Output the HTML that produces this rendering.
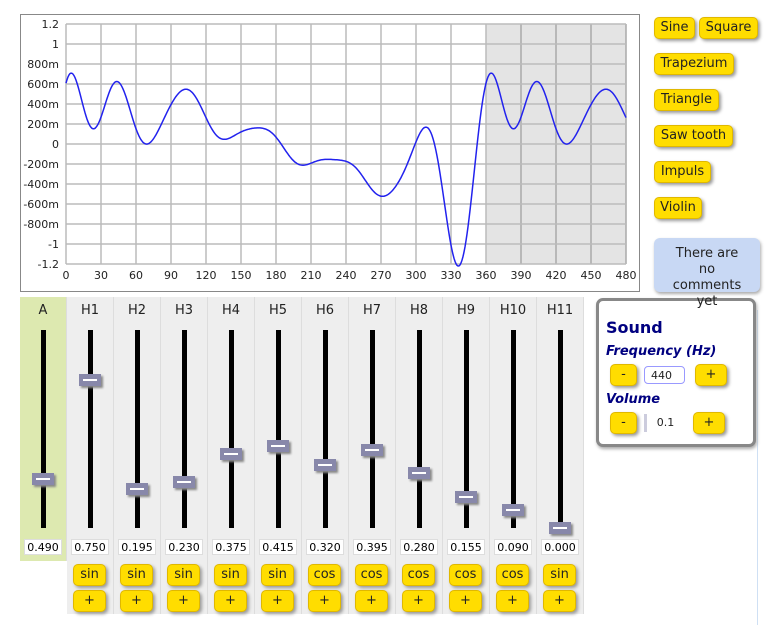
<!DOCTYPE html>
<html><head><meta charset="utf-8"><style>
body{margin:0;width:771px;height:625px;background:#fff;font-family:"DejaVu Sans","Liberation Sans",sans-serif;position:relative;overflow:hidden}
.b{position:absolute;background:#ffdd00;border:1px solid #e0b800;border-radius:5px;box-shadow:2px 2px 3px #999;font-size:13px;color:#222;line-height:20px;text-align:center;box-sizing:border-box;height:22px}
.col{position:absolute;top:297px;width:46px;height:317px;background:#eeeeee;border-right:1px solid #ddd}
.lbl{position:absolute;top:6px;width:100%;text-align:center;font-size:13px;color:#222}
.trk{position:absolute;left:21px;top:33px;width:5px;height:198px;background:#000}
.th{position:absolute;left:12px;width:22px;height:12px;background:#8888aa;box-shadow:2px 2px 2px #888}
.th:after{content:"";position:absolute;left:4px;top:5px;width:14px;height:2px;background:#fff}
.val{position:absolute;left:4px;top:242px;width:38px;height:16px;background:#fff;border:1px solid #ddd;font-size:11px;line-height:16px;text-align:center;box-sizing:border-box}
.sb{width:33px;left:6px;font-size:13px}
</style></head><body>
<svg style="position:absolute;left:0;top:0" width="645" height="295">
<rect x="20.5" y="14.5" width="619" height="277" fill="#fff" stroke="#888"/>
<rect x="486" y="24" width="140" height="240" fill="#e4e4e4"/>
<g id="grid" stroke="#bbb" stroke-width="1.5"></g>
<g id="lab" font-size="11" fill="#222" font-family="DejaVu Sans,sans-serif"></g>
<path id="cv" fill="none" stroke="#2222ee" stroke-width="1.5"/>
</svg>
<div class="b" style="left:654px;top:17px;width:41px">Sine</div>
<div class="b" style="left:699px;top:17px;width:59px">Square</div>
<div class="b" style="left:654px;top:53px;width:80px">Trapezium</div>
<div class="b" style="left:654px;top:89px;width:65px">Triangle</div>
<div class="b" style="left:654px;top:125px;width:79px">Saw tooth</div>
<div class="b" style="left:654px;top:161px;width:57px">Impuls</div>
<div class="b" style="left:654px;top:197px;width:48px">Violin</div>
<div style="position:absolute;left:654px;top:238px;width:106px;height:54px;background:#c8d8f4;border-radius:6px;box-shadow:1px 2px 3px #aaa"></div>
<div style="position:absolute;left:757px;top:310px;width:1px;height:315px;background:#cfe0f4"></div>
<div style="position:absolute;left:596px;top:298px;width:160px;height:149px;border:3px solid #888;border-radius:7px;box-sizing:border-box;background:#fff;box-shadow:1px 2px 3px #aaa;color:#000080">
<div style="position:absolute;left:7px;top:17px;font-weight:bold;font-size:16px">Sound</div>
<div style="position:absolute;left:7px;top:43px;font-weight:bold;font-style:italic;font-size:13px">Frequency (Hz)</div>
<div class="b" style="left:11px;top:63px;width:27px">-</div>
<div style="position:absolute;left:45px;top:65px;width:41px;height:18px;border:1px solid #99f;border-radius:4px;font-size:11px;color:#222;line-height:18px;padding-left:6px;box-sizing:border-box">440</div>
<div class="b" style="left:96px;top:63px;width:32px">+</div>
<div style="position:absolute;left:7px;top:91px;font-weight:bold;font-style:italic;font-size:13px">Volume</div>
<div class="b" style="left:11px;top:111px;width:27px">-</div>
<div style="position:absolute;left:45px;top:113px;width:40px;height:18px;border-left:3px solid #ccd;font-size:11px;color:#222;line-height:18px;text-align:center;box-sizing:border-box">0.1</div>
<div class="b" style="left:94px;top:111px;width:32px">+</div>
</div>
<div style="position:absolute;left:654px;top:246px;width:106px;font-size:13px;text-align:center;line-height:16px;color:#222">There are<br>no<br>comments<br>yet</div>
<div id="cols"></div>
<script>
var g=document.getElementById('grid'),l=document.getElementById('lab'),s='',t='';
for(var i=0;i<=16;i++){var x=66+i*35;s+='<line x1="'+x+'" y1="24" x2="'+x+'" y2="264" stroke="'+(i>12?'#aaa':'#bbb')+'"/>';t+='<text x="'+x+'" y="279" text-anchor="middle">'+(i*30)+'</text>';}
var yl=['1.2','1','800m','600m','400m','200m','0','-200m','-400m','-600m','-800m','-1','-1.2'];
for(i=0;i<=12;i++){var y=24+i*20;s+='<line x1="66" y1="'+y+'" x2="626" y2="'+y+'"/>';t+='<text x="59" y="'+(y+4)+'" text-anchor="end">'+yl[i]+'</text>';}
g.innerHTML=s;l.innerHTML=t;
var A=0.49,h=[0.75,0.195,0.23,0.375,0.415,0.32,0.395,0.28,0.155,0.09,0],f=['sin','sin','sin','sin','sin','cos','cos','cos','cos','cos','sin'];
var d='';for(var p=0;p<=560;p++){var a=p/35*30*Math.PI/180,v=0;for(var k=0;k<11;k++)v+=h[k]*(f[k]=='sin'?Math.sin((k+1)*a):Math.cos((k+1)*a));v*=A;d+=(p?'L':'M')+(66+p)+' '+(144-v*100).toFixed(1);}
document.getElementById('cv').setAttribute('d',d);
var c='',vals=[A].concat(h);
for(i=0;i<12;i++){var L=20+i*47,v=vals[i],pos=i==0?v/2:v;
c+='<div class="col" style="left:'+L+'px;'+(i==0?'background:#dde9b0;height:264px;':'')+'"><div class="lbl">'+(i?'H'+i:'A')+'</div><div class="trk"></div><div class="th" style="top:'+(231-pos*198-6)+'px"></div><div class="val">'+v.toFixed(3)+'</div>'+(i?'<div class="b sb" style="top:267px">'+f[i-1]+'</div><div class="b sb" style="top:293px">+</div>':'')+'</div>';}
document.getElementById('cols').innerHTML=c;
</script>
</body></html>
